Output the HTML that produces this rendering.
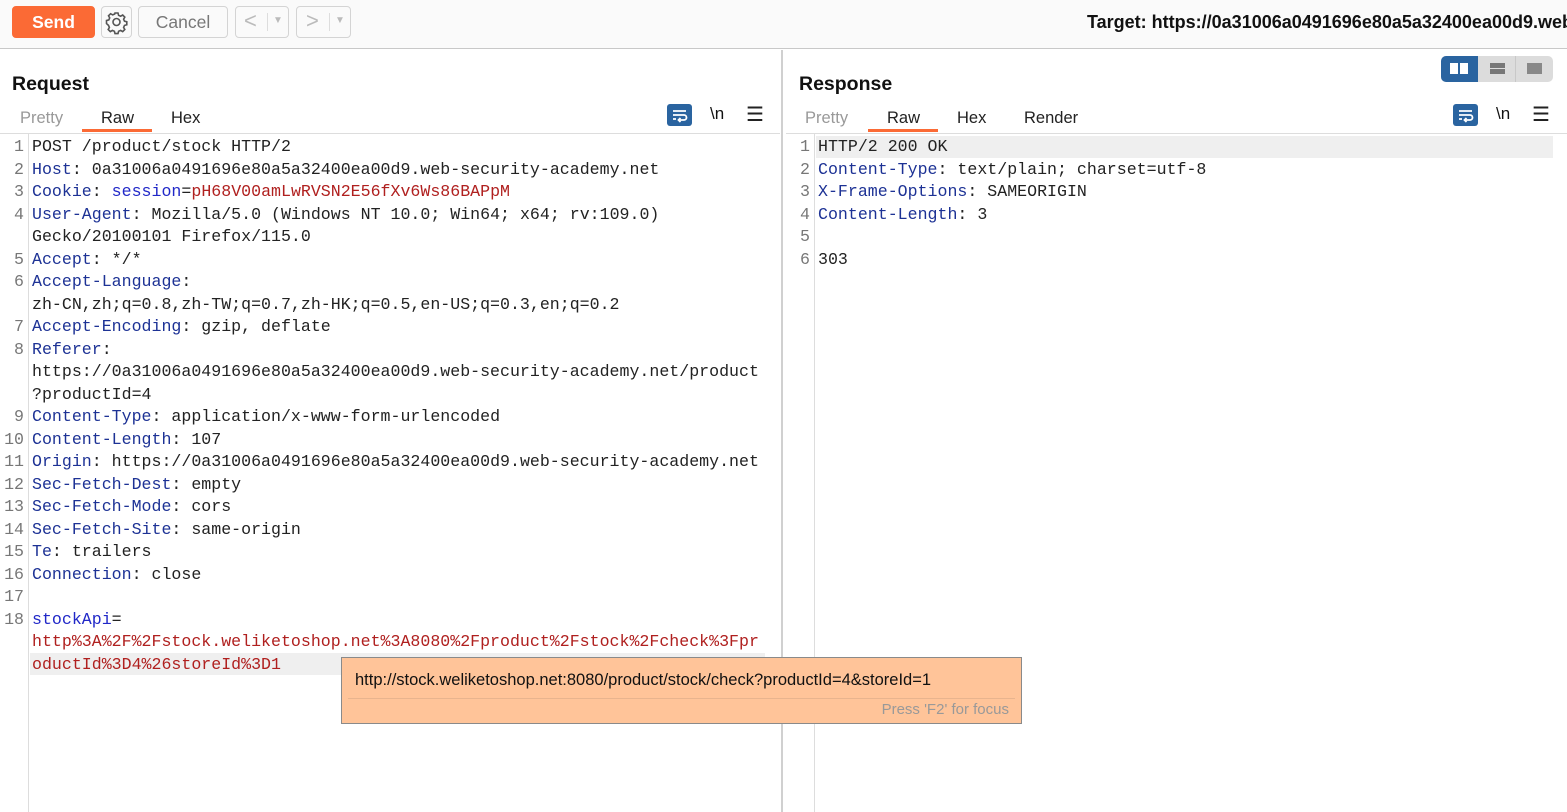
<!DOCTYPE html>
<html><head><meta charset="utf-8">
<style>
*{margin:0;padding:0;box-sizing:border-box}
body{width:1567px;height:812px;overflow:hidden;background:#fff;font-family:"Liberation Sans",sans-serif;position:relative}
.top{position:absolute;left:0;top:0;width:1567px;height:49px;background:#fafafa;border-bottom:1px solid #c8c8c8}
.btn{position:absolute;top:6px;height:32px;border:1px solid #d4d4d4;border-radius:4px;background:#fafafa}
.a{position:absolute}
.mono{font-family:"Liberation Mono",monospace;font-size:16.6px;white-space:pre;line-height:22.5px}
.k{color:#1d3295}.r{color:#b0201f}.b{color:#2128c8}
.ln{position:absolute;color:#777;text-align:right;font-family:"Liberation Mono",monospace;font-size:16.6px;line-height:22.5px}
.tab{position:absolute;font-size:16px;color:#222}
.icon{position:absolute;width:25px;height:22px;background:#2a64a0;border-radius:3px}
</style></head><body>
<div class="top">
  <div class="btn" style="left:12px;width:83px;background:#fb6a35;border-color:#fb6a35;color:#fff;font-weight:bold;font-size:17.5px;text-align:center;line-height:30px">Send</div>
  <div class="btn" style="left:101px;width:31px">
    <svg width="29" height="30" viewBox="0 0 29 30"><g fill="none" stroke="#555" stroke-width="1.6"><circle cx="14.5" cy="15" r="3.5"/><path d="M13 6h3l.6 2.3 2 .9 2.1-1.2 2.1 2.1-1.2 2.1.9 2 2.3.6v3l-2.3.6-.9 2 1.2 2.1-2.1 2.1-2.1-1.2-2 .9-.6 2.3h-3l-.6-2.3-2-.9-2.1 1.2-2.1-2.1 1.2-2.1-.9-2L4.5 16.5v-3l2.3-.6.9-2-1.2-2.1 2.1-2.1 2.1 1.2 2-.9z"/></g></svg>
  </div>
  <div class="btn" style="left:138px;width:90px;color:#777;font-size:17.5px;text-align:center;line-height:30px">Cancel</div>
  <div class="btn" style="left:235px;width:54px;color:#bbb;font-size:22px;line-height:28px;padding-left:8px">&lt;<span style="position:absolute;left:31px;top:6px;width:1px;height:18px;background:#ddd"></span><span style="position:absolute;left:37px;top:0;font-size:10px">▼</span></div>
  <div class="btn" style="left:296px;width:55px;color:#bbb;font-size:22px;line-height:28px;padding-left:9px">&gt;<span style="position:absolute;left:32px;top:6px;width:1px;height:18px;background:#ddd"></span><span style="position:absolute;left:38px;top:0;font-size:10px">▼</span></div>
  <div class="a" style="left:1087px;top:12px;font-weight:bold;font-size:18px;color:#111;white-space:nowrap">Target: https://0a31006a0491696e80a5a32400ea00d9.web</div>
</div>

<div class="a" style="left:781px;top:50px;width:2px;height:762px;background:#d0d0d0"></div>

<div class="a" style="left:12px;top:73px;font-weight:bold;font-size:19.5px;color:#111">Request</div>
<div class="tab" style="left:20px;top:109px;color:#999;font-size:16.5px">Pretty</div>
<div class="tab" style="left:101px;top:109px;font-size:16.5px">Raw</div>
<div class="a" style="left:82px;top:129px;width:70px;height:3px;background:#fb6a35"></div>
<div class="tab" style="left:171px;top:109px;font-size:16.5px">Hex</div>
<div class="icon" style="left:667px;top:104px"><svg width="25" height="22"><g fill="none" stroke="#fff" stroke-width="1.8"><path d="M6 7h13M6 11h11a2.5 2.5 0 010 5h-5M6 15h3"/><path d="M13.5 14l-2 2 2 2"/></g></svg></div>
<div class="a" style="left:710px;top:104px;font-size:17px;color:#111">\n</div>
<div class="a" style="left:746px;top:102px;font-size:20px;color:#222">☰</div>
<div class="a" style="left:0;top:133px;width:780px;height:1px;background:#ddd"></div>
<div class="a" style="left:28px;top:134px;width:1px;height:678px;background:#ddd"></div>
<div class="a" style="left:30px;top:653px;width:735px;height:22px;background:#efefef"></div>

<div class="ln" style="left:0;top:136px;width:24px">1<br>2<br>3<br>4<br><br>5<br>6<br><br>7<br>8<br><br><br>9<br>10<br>11<br>12<br>13<br>14<br>15<br>16<br>17<br>18</div>
<div class="a mono" style="left:32px;top:136px;color:#222">POST /product/stock HTTP/2
<span class="k">Host</span>: 0a31006a0491696e80a5a32400ea00d9.web-security-academy.net
<span class="k">Cookie</span>: <span class="b">session</span>=<span class="r">pH68V00amLwRVSN2E56fXv6Ws86BAPpM</span>
<span class="k">User-Agent</span>: Mozilla/5.0 (Windows NT 10.0; Win64; x64; rv:109.0)
Gecko/20100101 Firefox/115.0
<span class="k">Accept</span>: */*
<span class="k">Accept-Language</span>:
zh-CN,zh;q=0.8,zh-TW;q=0.7,zh-HK;q=0.5,en-US;q=0.3,en;q=0.2
<span class="k">Accept-Encoding</span>: gzip, deflate
<span class="k">Referer</span>:
https://0a31006a0491696e80a5a32400ea00d9.web-security-academy.net/product
?productId=4
<span class="k">Content-Type</span>: application/x-www-form-urlencoded
<span class="k">Content-Length</span>: 107
<span class="k">Origin</span>: https://0a31006a0491696e80a5a32400ea00d9.web-security-academy.net
<span class="k">Sec-Fetch-Dest</span>: empty
<span class="k">Sec-Fetch-Mode</span>: cors
<span class="k">Sec-Fetch-Site</span>: same-origin
<span class="k">Te</span>: trailers
<span class="k">Connection</span>: close

<span class="b">stockApi</span>=
<span class="r">http%3A%2F%2Fstock.weliketoshop.net%3A8080%2Fproduct%2Fstock%2Fcheck%3Fpr
oductId%3D4%26storeId%3D1</span></div>

<div class="a" style="left:799px;top:73px;font-weight:bold;font-size:19.5px;color:#111">Response</div>
<div class="a" style="left:1441px;top:56px;width:112px;height:26px;background:#dcdcdc;border-radius:5px"></div>
<div class="a" style="left:1441px;top:56px;width:37px;height:26px;background:#2a64a0;border-radius:5px 0 0 5px"></div>
<div class="a" style="left:1450px;top:63px;width:8px;height:11px;background:#fff"></div>
<div class="a" style="left:1460px;top:63px;width:8px;height:11px;background:#fff"></div>
<div class="a" style="left:1515px;top:56px;width:1px;height:26px;background:#c8c8c8"></div>
<div class="a" style="left:1490px;top:63px;width:15px;height:5px;background:#777"></div>
<div class="a" style="left:1490px;top:69px;width:15px;height:5px;background:#777"></div>
<div class="a" style="left:1527px;top:63px;width:15px;height:11px;background:#888"></div>

<div class="tab" style="left:805px;top:109px;color:#999;font-size:16.5px">Pretty</div>
<div class="tab" style="left:887px;top:109px;font-size:16.5px">Raw</div>
<div class="a" style="left:868px;top:129px;width:70px;height:3px;background:#fb6a35"></div>
<div class="tab" style="left:957px;top:109px;font-size:16.5px">Hex</div>
<div class="tab" style="left:1024px;top:109px;font-size:16.5px">Render</div>
<div class="icon" style="left:1453px;top:104px"><svg width="25" height="22"><g fill="none" stroke="#fff" stroke-width="1.8"><path d="M6 7h13M6 11h11a2.5 2.5 0 010 5h-5M6 15h3"/><path d="M13.5 14l-2 2 2 2"/></g></svg></div>
<div class="a" style="left:1496px;top:104px;font-size:17px;color:#111">\n</div>
<div class="a" style="left:1532px;top:102px;font-size:20px;color:#222">☰</div>
<div class="a" style="left:786px;top:133px;width:781px;height:1px;background:#ddd"></div>
<div class="a" style="left:814px;top:134px;width:1px;height:678px;background:#ddd"></div>
<div class="a" style="left:816px;top:136px;width:737px;height:22px;background:#efefef"></div>
<div class="ln" style="left:786px;top:136px;width:24px">1<br>2<br>3<br>4<br>5<br>6</div>
<div class="a mono" style="left:818px;top:136px;color:#222">HTTP/2 200 OK
<span class="k">Content-Type</span>: text/plain; charset=utf-8
<span class="k">X-Frame-Options</span>: SAMEORIGIN
<span class="k">Content-Length</span>: 3

303</div>

<div class="a" style="left:341px;top:657px;width:681px;height:67px;background:#ffc499;border:1px solid #8a8a8a">
  <div class="a" style="left:13px;top:13px;font-size:16.5px;color:#111;white-space:nowrap">http://stock.weliketoshop.net:8080/product/stock/check?productId=4&amp;storeId=1</div>
  <div class="a" style="left:6px;top:40px;width:667px;height:1px;background:#e8b48e"></div>
  <div class="a" style="right:12px;top:43px;font-size:15px;color:#999">Press 'F2' for focus</div>
</div>
</body></html>
